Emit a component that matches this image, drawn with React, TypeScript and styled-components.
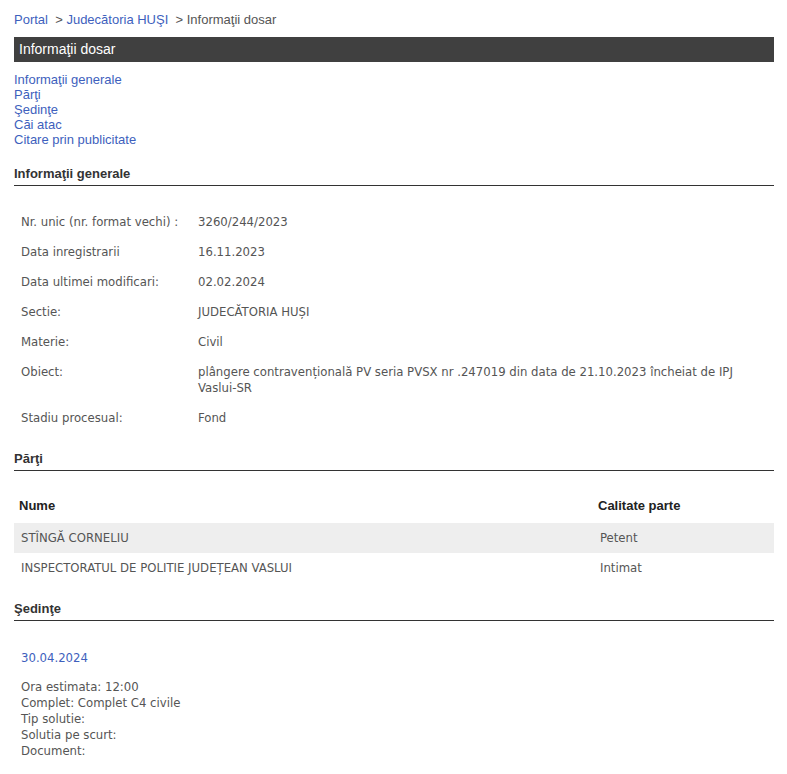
import React from "react";
import styled, { createGlobalStyle } from "styled-components";

const Global = createGlobalStyle`
  html, body { margin: 0; padding: 0; background: #fff; }
  body { font-family: "Liberation Sans", Arial, sans-serif; font-size: 13px; color: #555; }
`;

const DATA_FONT = `Tahoma, "DejaVu Sans Condensed", "DejaVu Sans", sans-serif`;

const Page = styled.div`
  padding: 12px 13px 0 14px;
`;

const Breadcrumb = styled.div`
  font-size: 13px;
  line-height: 15px;
  color: #555;
`;

const Link = styled.a`
  color: #3e5fbd;
  text-decoration: none;
  cursor: pointer;
`;

const TitleBar = styled.div`
  margin-top: 10px;
  height: 25px;
  line-height: 25px;
  background: #404040;
  color: #fff;
  font-size: 14px;
  padding: 0 5px;
`;

const Nav = styled.nav`
  margin-top: 10px;
  display: flex;
  flex-direction: column;
  font-size: 13px;
  line-height: 15px;
`;

const SectionTitle = styled.h2<{ $gap?: number }>`
  margin: ${(p) => p.$gap ?? 18}px 0 0;
  padding-bottom: 4px;
  border-bottom: 1px solid #333;
  font-size: 13px;
  line-height: 15px;
  font-weight: bold;
  color: #333;
`;

const InfoTable = styled.table`
  margin-top: 21px;
  width: 100%;
  border-collapse: collapse;
  font-family: ${DATA_FONT};
  font-size: 13px;
  line-height: 16px;
  color: #555;
`;

const LabelCell = styled.td`
  width: 163px;
  padding: 7px;
  vertical-align: top;
`;

const ValueCell = styled.td`
  padding: 7px;
  vertical-align: top;
`;

const PartyTable = styled.table`
  margin-top: 21px;
  width: 100%;
  border-collapse: collapse;
  font-size: 13px;
`;

const HeadCell = styled.th<{ $w?: number }>`
  text-align: left;
  font-weight: bold;
  color: #222;
  font-size: 13px;
  line-height: 16px;
  padding: 6px 5px 9px;
  ${(p) => (p.$w ? `width: ${p.$w}px;` : "")}
`;

const PartyRow = styled.tr<{ $shaded?: boolean }>`
  background: ${(p) => (p.$shaded ? "#eeeeee" : "transparent")};
`;

const PartyCell = styled.td`
  font-family: ${DATA_FONT};
  color: #555;
  line-height: 16px;
  padding: 7px;
`;

const Hearing = styled.div`
  margin-top: 29px;
  padding-left: 7px;
  font-family: ${DATA_FONT};
  font-size: 13px;
  line-height: 16px;
  color: #555;
`;

const HearingDate = styled.div`
  color: #3e5fbd;
  margin-bottom: 13px;
`;

const info: [string, string][] = [
  ["Nr. unic (nr. format vechi) :", "3260/244/2023"],
  ["Data inregistrarii", "16.11.2023"],
  ["Data ultimei modificari:", "02.02.2024"],
  ["Sectie:", "JUDECĂTORIA HUȘI"],
  ["Materie:", "Civil"],
  [
    "Obiect:",
    "plângere contravențională PV seria PVSX nr .247019 din data de 21.10.2023 încheiat de IPJ Vaslui-SR",
  ],
  ["Stadiu procesual:", "Fond"],
];

const parties: [string, string][] = [
  ["STÎNGĂ CORNELIU", "Petent"],
  ["INSPECTORATUL DE POLITIE JUDEȚEAN VASLUI", "Intimat"],
];

export default function App() {
  return (
    <>
      <Global />
      <Page>
        <Breadcrumb>
          <Link>Portal</Link>&nbsp; &gt; <Link>Judecătoria HUŞI</Link>&nbsp; &gt; Informaţii dosar
        </Breadcrumb>
        <TitleBar>Informaţii dosar</TitleBar>
        <Nav>
          <Link>Informaţii generale</Link>
          <Link>Părţi</Link>
          <Link>Şedinţe</Link>
          <Link>Căi atac</Link>
          <Link>Citare prin publicitate</Link>
        </Nav>

        <SectionTitle $gap={19}>Informaţii generale</SectionTitle>
        <InfoTable>
          <tbody>
            {info.map(([k, v]) => (
              <tr key={k}>
                <LabelCell>{k}</LabelCell>
                <ValueCell>{v}</ValueCell>
              </tr>
            ))}
          </tbody>
        </InfoTable>

        <SectionTitle>Părţi</SectionTitle>
        <PartyTable>
          <thead>
            <tr>
              <HeadCell $w={569}>Nume</HeadCell>
              <HeadCell>Calitate parte</HeadCell>
            </tr>
          </thead>
          <tbody>
            {parties.map(([n, c], i) => (
              <PartyRow key={n} $shaded={i === 0}>
                <PartyCell>{n}</PartyCell>
                <PartyCell>{c}</PartyCell>
              </PartyRow>
            ))}
          </tbody>
        </PartyTable>

        <SectionTitle>Şedinţe</SectionTitle>
        <Hearing>
          <HearingDate>30.04.2024</HearingDate>
          <div>Ora estimata: 12:00</div>
          <div>Complet: Complet C4 civile</div>
          <div>Tip solutie:</div>
          <div>Solutia pe scurt:</div>
          <div>Document:</div>
        </Hearing>
      </Page>
    </>
  );
}
